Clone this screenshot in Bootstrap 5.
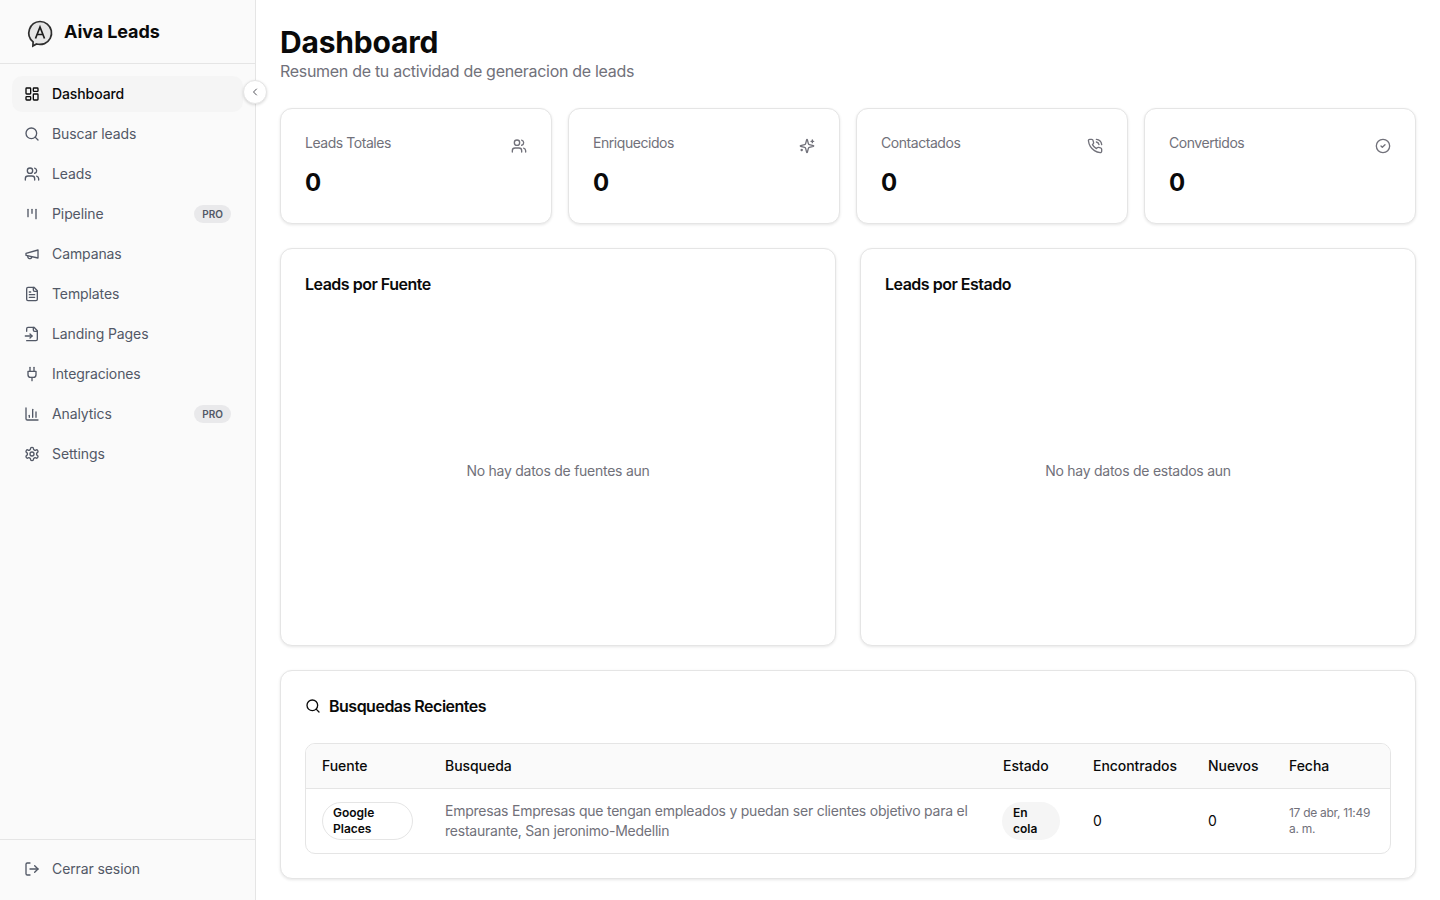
<!DOCTYPE html>
<html lang="es">
<head>
    <meta charset="UTF-8">
    <meta name="viewport" content="width=device-width, initial-scale=1.0">
    <title>Aiva Leads - Dashboard</title>
    <link href="https://cdn.jsdelivr.net/npm/bootstrap@5.3.0/dist/css/bootstrap.min.css" rel="stylesheet">
    <style>
        body {
            font-family: Inter, "Liberation Sans", sans-serif;
            background-color: #fff;
            color: #0a0a0a;
            font-size: 14px;
            line-height: 20px;
            height: 900px;
            overflow: hidden;
        }
        svg.ico {
            width: 16px;
            height: 16px;
            fill: none;
            stroke: currentColor;
            stroke-width: 2;
            stroke-linecap: round;
            stroke-linejoin: round;
            flex-shrink: 0;
        }
        .side-bar {
            width: 256px;
            height: 900px;
            background-color: #fafafa;
            border-right: 1px solid #e5e5e5;
            position: relative;
        }
        .side-brand {
            height: 64px;
            padding: 0 24px;
            border-bottom: 1px solid #e5e5e5;
            font-size: 18px;
            font-weight: 700;
            letter-spacing: -0.1px;
        }
        .side-nav {
            padding: 12px;
        }
        .side-link {
            height: 36px;
            margin-bottom: 4px;
            padding: 0 12px;
            border-radius: 10px;
            color: #525866;
            text-decoration: none;
            gap: 12px;
            letter-spacing: -0.1px;
        }
        .side-link.active {
            background-color: #f5f5f5;
            color: #0a0a0a;
            font-weight: 500;
        }
        .pro-tag {
            margin-left: auto;
            background-color: #e9e9eb;
            color: #525866;
            font-size: 10px;
            font-weight: 600;
            line-height: 16px;
            letter-spacing: 0;
            padding: 1px 8px;
            border-radius: 9px;
        }
        .side-toggle {
            position: absolute;
            top: 80px;
            left: 243px;
            width: 24px;
            height: 24px;
            border-radius: 50%;
            background-color: #fff;
            border: 1px solid #e5e5e5;
            box-shadow: 0 1px 3px rgba(0, 0, 0, .15);
            color: #52525b;
            padding: 0;
        }
        .side-toggle svg.ico {
            width: 12px;
            height: 12px;
        }
        .side-foot {
            position: absolute;
            bottom: 0;
            left: 0;
            right: 0;
            height: 61px;
            border-top: 1px solid #e5e5e5;
            padding: 11px 12px;
        }
        .main-area {
            padding: 24px;
            min-width: 0;
        }
        .page-title {
            font-size: 30px;
            font-weight: 700;
            line-height: 36px;
            letter-spacing: -0.2px;
            margin: 0;
        }
        .page-sub {
            font-size: 16px;
            line-height: 22px;
            letter-spacing: -0.3px;
            color: #71717a;
            margin: 0 0 26px;
        }
        .box-card {
            border: 1px solid #e5e5e5;
            border-radius: 12px;
            box-shadow: 0 1px 3px rgba(0, 0, 0, .1);
            background-color: #fff;
        }
        .stat-grid {
            display: grid;
            grid-template-columns: repeat(4, 1fr);
            gap: 16px;
            margin-bottom: 24px;
        }
        .stat-card {
            height: 116px;
            padding: 24px;
        }
        .stat-label {
            color: #71717a;
            line-height: 20px;
            letter-spacing: -0.45px;
        }
        .stat-value {
            font-size: 24px;
            font-weight: 700;
            line-height: 32px;
            margin-top: 14px;
        }
        .stat-card svg.ico {
            color: #71717a;
            margin-top: 5px;
        }
        .chart-grid {
            display: grid;
            grid-template-columns: repeat(2, 1fr);
            gap: 24px;
            margin-bottom: 24px;
        }
        .chart-card {
            height: 398px;
            padding: 24px;
        }
        .card-heading {
            font-size: 16px;
            font-weight: 600;
            line-height: 22px;
            letter-spacing: -0.5px;
            margin: 0;
        }
        .chart-empty {
            height: 300px;
            margin-top: 26px;
            color: #71717a;
            letter-spacing: -0.26px;
        }
        .recent-card {
            padding: 24px;
            height: 209px;
        }
        .table-wrap {
            border: 1px solid #e5e5e5;
            border-radius: 10px;
            margin-top: 26px;
            overflow: hidden;
        }
        .recent-table {
            margin: 0;
            table-layout: fixed;
            width: 100%;
        }
        .recent-table th {
            height: 44px;
            background-color: #fafafa;
            font-weight: 500;
            color: #0a0a0a;
            padding: 0 16px;
            vertical-align: middle;
            border-bottom: 1px solid #e5e5e5;
            letter-spacing: -0.05px;
        }
        .recent-table td {
            padding: 12px 16px;
            vertical-align: middle;
            border: 0;
            color: #0a0a0a;
            height: 65px;
        }
        .source-pill,
        .state-pill {
            display: inline-block;
            font-size: 12px;
            font-weight: 600;
            line-height: 16px;
            padding: 2px 10px;
            border-radius: 19px;
        }
        .source-pill {
            border: 1px solid #e5e5e5;
            width: 91px;
        }
        .state-pill {
            background-color: #f5f5f5;
            width: 58px;
            margin-left: -1px;
            padding: 3px 11px;
        }
        .recent-table td.query-text {
            color: #71717a;
            line-height: 20px;
            letter-spacing: -0.23px;
        }
        .recent-table td.date-text {
            color: #71717a;
            font-size: 12px;
            line-height: 16px;
            letter-spacing: -0.3px;
        }
    </style>
</head>
<body>
    <div class="d-flex">
        <aside class="side-bar flex-shrink-0">
            <div class="side-brand d-flex align-items-center gap-2">
                <svg width="32" height="32" viewBox="0 0 32 32" class="flex-shrink-0">
                    <path d="M16 5.500a11.500 11.500 0 0 1 4.500 22.100c-2.800 1-5.500 1-8 .4l-3.600 2 .2-4.100A11.500 11.500 0 0 1 16 5.500z" fill="#e6e6e6" stroke="#2e2e2e" stroke-width="1.700"/>
                    <path d="M11.500 22.500 16 11 20.500 22.500M13.200 18.500h5.600" fill="none" stroke="#1c1c1c" stroke-width="1.700"/>
                </svg>
                <span>Aiva Leads</span>
            </div>
            <nav class="side-nav">
                <a href="#" class="side-link active d-flex align-items-center">
                    <svg class="ico" viewBox="0 0 24 24"><rect width="7" height="9" x="3" y="3" rx="1"/><rect width="7" height="5" x="14" y="3" rx="1"/><rect width="7" height="9" x="14" y="12" rx="1"/><rect width="7" height="5" x="3" y="16" rx="1"/></svg>
                    Dashboard
                </a>
                <a href="#" class="side-link d-flex align-items-center">
                    <svg class="ico" viewBox="0 0 24 24"><circle cx="11" cy="11" r="8"/><path d="m21 21-4.300-4.300"/></svg>
                    Buscar leads
                </a>
                <a href="#" class="side-link d-flex align-items-center">
                    <svg class="ico" viewBox="0 0 24 24"><path d="M16 21v-2a4 4 0 0 0-4-4H6a4 4 0 0 0-4 4v2"/><circle cx="9" cy="7" r="4"/><path d="M22 21v-2a4 4 0 0 0-3-3.870"/><path d="M16 3.130a4 4 0 0 1 0 7.750"/></svg>
                    Leads
                </a>
                <a href="#" class="side-link d-flex align-items-center">
                    <svg class="ico" viewBox="0 0 24 24"><path d="M6 5v11"/><path d="M12 5v6"/><path d="M18 5v14"/></svg>
                    Pipeline
                    <span class="pro-tag">PRO</span>
                </a>
                <a href="#" class="side-link d-flex align-items-center">
                    <svg class="ico" viewBox="0 0 24 24"><path d="m3 11 18-5v12L3 14v-3z"/><path d="M11.600 16.800a3 3 0 1 1-5.800-1.600"/></svg>
                    Campanas
                </a>
                <a href="#" class="side-link d-flex align-items-center">
                    <svg class="ico" viewBox="0 0 24 24"><path d="M15 2H6a2 2 0 0 0-2 2v16a2 2 0 0 0 2 2h12a2 2 0 0 0 2-2V7Z"/><path d="M14 2v4a2 2 0 0 0 2 2h4"/><path d="M10 9H8"/><path d="M16 13H8"/><path d="M16 17H8"/></svg>
                    Templates
                </a>
                <a href="#" class="side-link d-flex align-items-center">
                    <svg class="ico" viewBox="0 0 24 24"><path d="M4 22h14a2 2 0 0 0 2-2V7l-5-5H6a2 2 0 0 0-2 2v4"/><path d="M14 2v4a2 2 0 0 0 2 2h4"/><path d="M2 15h10"/><path d="m9 18 3-3-3-3"/></svg>
                    Landing Pages
                </a>
                <a href="#" class="side-link d-flex align-items-center">
                    <svg class="ico" viewBox="0 0 24 24"><path d="M12 22v-5"/><path d="M9 8V2"/><path d="M15 8V2"/><path d="M18 8v5a4 4 0 0 1-4 4h-4a4 4 0 0 1-4-4V8Z"/></svg>
                    Integraciones
                </a>
                <a href="#" class="side-link d-flex align-items-center">
                    <svg class="ico" viewBox="0 0 24 24"><path d="M3 3v16a2 2 0 0 0 2 2h16"/><path d="M18 17V9"/><path d="M13 17V5"/><path d="M8 17v-3"/></svg>
                    Analytics
                    <span class="pro-tag">PRO</span>
                </a>
                <a href="#" class="side-link d-flex align-items-center">
                    <svg class="ico" viewBox="0 0 24 24"><path d="M12.220 2h-.440a2 2 0 0 0-2 2v.180a2 2 0 0 1-1 1.730l-.430.250a2 2 0 0 1-2 0l-.150-.080a2 2 0 0 0-2.730.730l-.220.380a2 2 0 0 0 .730 2.730l.150.100a2 2 0 0 1 1 1.720v.510a2 2 0 0 1-1 1.740l-.150.090a2 2 0 0 0-.730 2.730l.220.380a2 2 0 0 0 2.730.730l.150-.080a2 2 0 0 1 2 0l.430.250a2 2 0 0 1 1 1.730V20a2 2 0 0 0 2 2h.440a2 2 0 0 0 2-2v-.180a2 2 0 0 1 1-1.730l.430-.250a2 2 0 0 1 2 0l.150.080a2 2 0 0 0 2.730-.730l.220-.390a2 2 0 0 0-.730-2.730l-.150-.080a2 2 0 0 1-1-1.740v-.500a2 2 0 0 1 1-1.740l.150-.090a2 2 0 0 0 .730-2.730l-.220-.380a2 2 0 0 0-2.730-.730l-.150.080a2 2 0 0 1-2 0l-.430-.250a2 2 0 0 1-1-1.730V4a2 2 0 0 0-2-2z"/><circle cx="12" cy="12" r="3"/></svg>
                    Settings
                </a>
            </nav>
            <button type="button" class="side-toggle btn d-flex align-items-center justify-content-center" aria-label="Colapsar">
                <svg class="ico" viewBox="0 0 24 24"><path d="m15 18-6-6 6-6"/></svg>
            </button>
            <div class="side-foot">
                <a href="#" class="side-link d-flex align-items-center mb-0 mt-0">
                    <svg class="ico" viewBox="0 0 24 24"><path d="M9 21H5a2 2 0 0 1-2-2V5a2 2 0 0 1 2-2h4"/><path d="m16 17 5-5-5-5"/><path d="M21 12H9"/></svg>
                    Cerrar sesion
                </a>
            </div>
        </aside>

        <main class="main-area flex-grow-1">
            <h1 class="page-title">Dashboard</h1>
            <p class="page-sub">Resumen de tu actividad de generacion de leads</p>

            <div class="stat-grid">
                <div class="box-card stat-card d-flex justify-content-between align-items-start">
                    <div>
                        <div class="stat-label">Leads Totales</div>
                        <div class="stat-value">0</div>
                    </div>
                    <svg class="ico" viewBox="0 0 24 24"><path d="M16 21v-2a4 4 0 0 0-4-4H6a4 4 0 0 0-4 4v2"/><circle cx="9" cy="7" r="4"/><path d="M22 21v-2a4 4 0 0 0-3-3.870"/><path d="M16 3.130a4 4 0 0 1 0 7.750"/></svg>
                </div>
                <div class="box-card stat-card d-flex justify-content-between align-items-start">
                    <div>
                        <div class="stat-label">Enriquecidos</div>
                        <div class="stat-value">0</div>
                    </div>
                    <svg class="ico" viewBox="0 0 24 24"><path d="M9.940 15.500A2 2 0 0 0 8.500 14.060l-6.130-1.580a.500.500 0 0 1 0-.960L8.500 9.940A2 2 0 0 0 9.940 8.500l1.580-6.130a.500.500 0 0 1 .960 0L14.060 8.500A2 2 0 0 0 15.500 9.940l6.130 1.580a.500.500 0 0 1 0 .960L15.500 14.060a2 2 0 0 0-1.440 1.440l-1.580 6.130a.500.500 0 0 1-.960 0z"/><path d="M20 3v4"/><path d="M22 5h-4"/><path d="M4 17v2"/><path d="M5 18H3"/></svg>
                </div>
                <div class="box-card stat-card d-flex justify-content-between align-items-start">
                    <div>
                        <div class="stat-label">Contactados</div>
                        <div class="stat-value">0</div>
                    </div>
                    <svg class="ico" viewBox="0 0 24 24"><path d="M22 16.920v3a2 2 0 0 1-2.180 2 19.790 19.790 0 0 1-8.630-3.070 19.500 19.500 0 0 1-6-6 19.790 19.790 0 0 1-3.070-8.670A2 2 0 0 1 4.110 2h3a2 2 0 0 1 2 1.720c.120.960.360 1.900.700 2.810a2 2 0 0 1-.450 2.110L8.090 9.910a16 16 0 0 0 6 6l1.270-1.270a2 2 0 0 1 2.110-.450c.910.340 1.850.580 2.810.700A2 2 0 0 1 22 16.920z"/><path d="M14.050 2a9 9 0 0 1 8 7.940"/><path d="M14.050 6A5 5 0 0 1 18 10"/></svg>
                </div>
                <div class="box-card stat-card d-flex justify-content-between align-items-start">
                    <div>
                        <div class="stat-label">Convertidos</div>
                        <div class="stat-value">0</div>
                    </div>
                    <svg class="ico" viewBox="0 0 24 24"><circle cx="12" cy="12" r="10"/><path d="m9 12 2 2 4-4"/></svg>
                </div>
            </div>

            <div class="chart-grid">
                <div class="box-card chart-card">
                    <h2 class="card-heading">Leads por Fuente</h2>
                    <div class="chart-empty d-flex align-items-center justify-content-center">No hay datos de fuentes aun</div>
                </div>
                <div class="box-card chart-card">
                    <h2 class="card-heading">Leads por Estado</h2>
                    <div class="chart-empty d-flex align-items-center justify-content-center">No hay datos de estados aun</div>
                </div>
            </div>

            <div class="box-card recent-card">
                <h2 class="card-heading d-flex align-items-center gap-2">
                    <svg class="ico" viewBox="0 0 24 24"><circle cx="11" cy="11" r="8"/><path d="m21 21-4.300-4.300"/></svg>
                    Busquedas Recientes
                </h2>
                <div class="table-wrap">
                    <table class="table recent-table">
                        <colgroup>
                            <col style="width: 123px">
                            <col>
                            <col style="width: 90px">
                            <col style="width: 115px">
                            <col style="width: 81px">
                            <col style="width: 117px">
                        </colgroup>
                        <thead>
                            <tr>
                                <th>Fuente</th>
                                <th>Busqueda</th>
                                <th>Estado</th>
                                <th>Encontrados</th>
                                <th>Nuevos</th>
                                <th>Fecha</th>
                            </tr>
                        </thead>
                        <tbody>
                            <tr>
                                <td><span class="source-pill">Google Places</span></td>
                                <td class="query-text">Empresas Empresas que tengan empleados y puedan ser clientes objetivo para el restaurante, San jeronimo-Medellin</td>
                                <td><span class="state-pill">En cola</span></td>
                                <td>0</td>
                                <td>0</td>
                                <td class="date-text">17 de abr, 11:49 a. m.</td>
                            </tr>
                        </tbody>
                    </table>
                </div>
            </div>
        </main>
    </div>
</body>
</html>
